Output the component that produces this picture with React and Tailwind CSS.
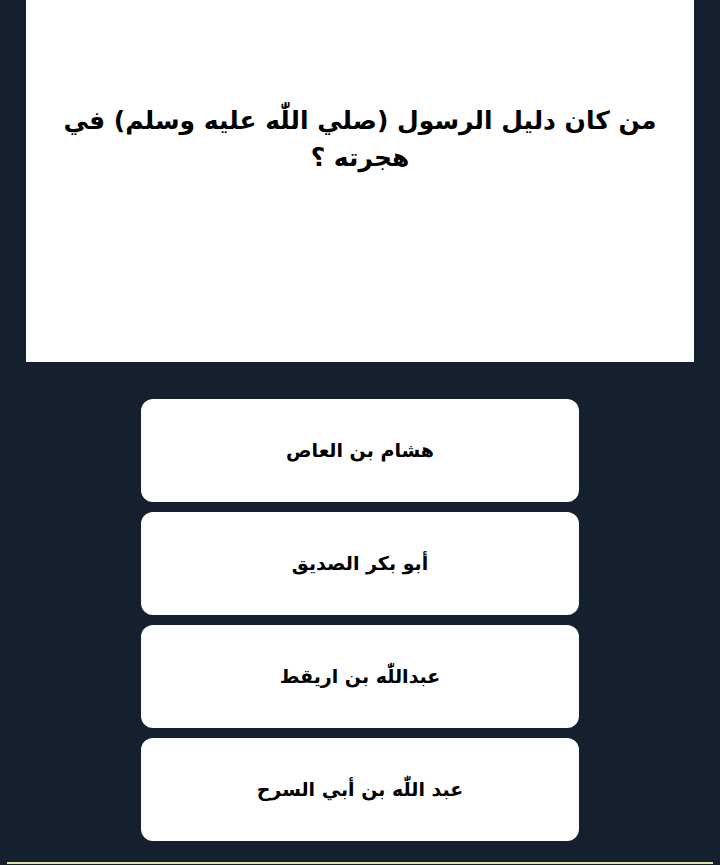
export default function App() {
  const answers = [
    "هشام بن العاص",
    "أبو بكر الصديق",
    "عبداللّٰه بن اريقط",
    "عبد اللّٰه بن أبي السرح",
  ];
  return (
    <div
      dir="rtl"
      className="min-h-[865px] bg-[#15202f] flex flex-col"
      style={{ fontFamily: '"DejaVu Sans", "Noto Sans", sans-serif' }}
    >
      <div className="mx-[26px] h-[362px] bg-white px-[20px] pt-[102px]">
        <h1 className="text-center text-[25px] leading-[37px] font-bold text-black">
          من كان دليل الرسول (صلي اللّٰه عليه وسلم) في هجرته ؟
        </h1>
      </div>
      <div className="flex flex-col items-center gap-[10px] pt-[37px]">
        {answers.map((a) => (
          <button
            key={a}
            className="w-[438px] h-[103px] rounded-[12px] bg-white text-black text-[19px] font-bold"
          >
            {a}
          </button>
        ))}
      </div>
      <div className="mt-[21px] mx-[7px] h-[2px] bg-[#e3e39d]" />
    </div>
  );
}
